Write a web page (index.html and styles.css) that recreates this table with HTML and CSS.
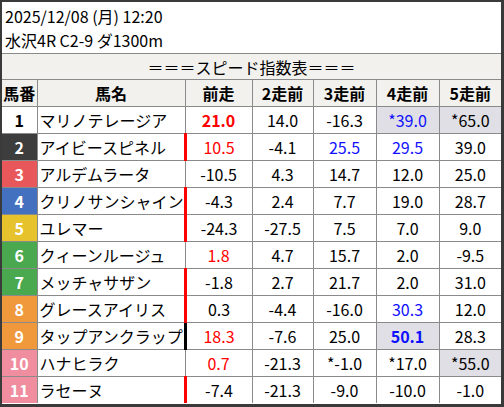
FILE: index.html
```html
<!DOCTYPE html>
<html lang="ja">
<head>
<meta charset="utf-8">
<link rel="stylesheet" href="styles.css">
</head>
<body>
<div class="frame">
  <div class="info">
    <div>2025/12/08 (月) 12:20</div>
    <div>水沢4R C2-9 ダ1300m</div>
  </div>
  <table class="speed">
    <colgroup>
      <col class="c-no"><col class="c-name"><col class="c-d1"><col class="c-d2"><col class="c-d3"><col class="c-d4"><col class="c-d5">
    </colgroup>
    <tr class="title-row"><td colspan="7">＝＝＝スピード指数表＝＝＝</td></tr>
    <tr class="head-row"><th>馬番</th><th>馬名</th><th>前走</th><th>2走前</th><th>3走前</th><th>4走前</th><th>5走前</th></tr>
    <tr><td class="no w1">1</td><td class="name">マリノテレージア</td><td class="v red bold">21.0</td><td class="v">14.0</td><td class="v">-16.3</td><td class="v blue hl">*39.0</td><td class="v hl">*65.0</td></tr>
    <tr><td class="no w2">2</td><td class="name">アイビースピネル</td><td class="v red bar-r">10.5</td><td class="v">-4.1</td><td class="v blue">25.5</td><td class="v blue">29.5</td><td class="v">39.0</td></tr>
    <tr><td class="no w3">3</td><td class="name">アルデムラータ</td><td class="v">-10.5</td><td class="v">4.3</td><td class="v">14.7</td><td class="v">12.0</td><td class="v">25.0</td></tr>
    <tr><td class="no w4">4</td><td class="name">クリノサンシャイン</td><td class="v bar-r">-4.3</td><td class="v">2.4</td><td class="v">7.7</td><td class="v">19.0</td><td class="v">28.7</td></tr>
    <tr><td class="no w5">5</td><td class="name">ユレマー</td><td class="v bar-r">-24.3</td><td class="v">-27.5</td><td class="v">7.5</td><td class="v">7.0</td><td class="v">9.0</td></tr>
    <tr><td class="no w6">6</td><td class="name">クィーンルージュ</td><td class="v red">1.8</td><td class="v">4.7</td><td class="v">15.7</td><td class="v">2.0</td><td class="v">-9.5</td></tr>
    <tr><td class="no w6">7</td><td class="name">メッチャサザン</td><td class="v bar-r">-1.8</td><td class="v">2.7</td><td class="v">21.7</td><td class="v">2.0</td><td class="v">31.0</td></tr>
    <tr><td class="no w8">8</td><td class="name">グレースアイリス</td><td class="v bar-r">0.3</td><td class="v">-4.4</td><td class="v">-16.0</td><td class="v blue">30.3</td><td class="v">12.0</td></tr>
    <tr><td class="no w8">9</td><td class="name">タップアンクラップ</td><td class="v red bar-k">18.3</td><td class="v">-7.6</td><td class="v">25.0</td><td class="v blue bold hl">50.1</td><td class="v">28.3</td></tr>
    <tr><td class="no w10">10</td><td class="name">ハナヒラク</td><td class="v red">0.7</td><td class="v">-21.3</td><td class="v">*-1.0</td><td class="v">*17.0</td><td class="v hl">*55.0</td></tr>
    <tr><td class="no w10">11</td><td class="name">ラセーヌ</td><td class="v bar-r">-7.4</td><td class="v">-21.3</td><td class="v">-9.0</td><td class="v">-10.0</td><td class="v">-1.0</td></tr>
  </table>
</div>
</body>
</html>
```
FILE: styles.css
```css
html, body {
  margin: 0;
  padding: 0;
  background: #fff;
}
body {
  font-family: "Noto Sans CJK JP", "Noto Sans", sans-serif;
  font-size: 16px;
  color: #000;
}
.frame {
  width: 504px;
  height: 407px;
  box-sizing: border-box;
  border: 2px solid #3a3a3a;
  border-right-width: 3px;
  border-bottom-width: 3px;
  background: #fff;
  overflow: hidden;
}
.info {
  padding: 2px 0 1px 3px;
  line-height: 24px;
  border-bottom: 1px solid #8a8a8a;
}
.speed {
  width: 499px;
  border-collapse: collapse;
  table-layout: fixed;
  border-style: hidden;
}
.c-no { width: 35px; }
.c-name { width: 148px; }
.c-d1 { width: 67px; }
.c-d2 { width: 61px; }
.c-d3 { width: 63px; }
.c-d4 { width: 63px; }
.c-d5 { width: 62px; }
.speed td, .speed th {
  border: 1px solid #8a8a8a;
  padding: 0;
  height: 26px;
  line-height: 24px;
  text-align: center;
  vertical-align: middle;
  white-space: nowrap;
  overflow: hidden;
}
.title-row td {
  background: #f2f1ed;
  height: 25px;
}
.head-row th {
  background: #f2f1ed;
  font-weight: bold;
}
.speed td.name {
  text-align: left;
  padding-left: 2px;
}
.no {
  font-weight: bold;
  color: #fff;
}
.w1 { background: #fff; color: #000; }
.w2 { background: #3d3d3d; }
.w3 { background: #e8585b; }
.w4 { background: #4470c0; }
.w5 { background: #e6c22c; }
.w6 { background: #4aa84e; }
.w8 { background: #f0993c; }
.w10 { background: #f08ea0; }
.red { color: #ff0000; }
.blue { color: #1010ff; }
.bold { font-weight: bold; }
.hl { background: #dfdfe5; }
.speed td.bar-r { border-left: 3px solid #ff0000; }
.speed td.bar-k { border-left: 3px solid #000; }
```
